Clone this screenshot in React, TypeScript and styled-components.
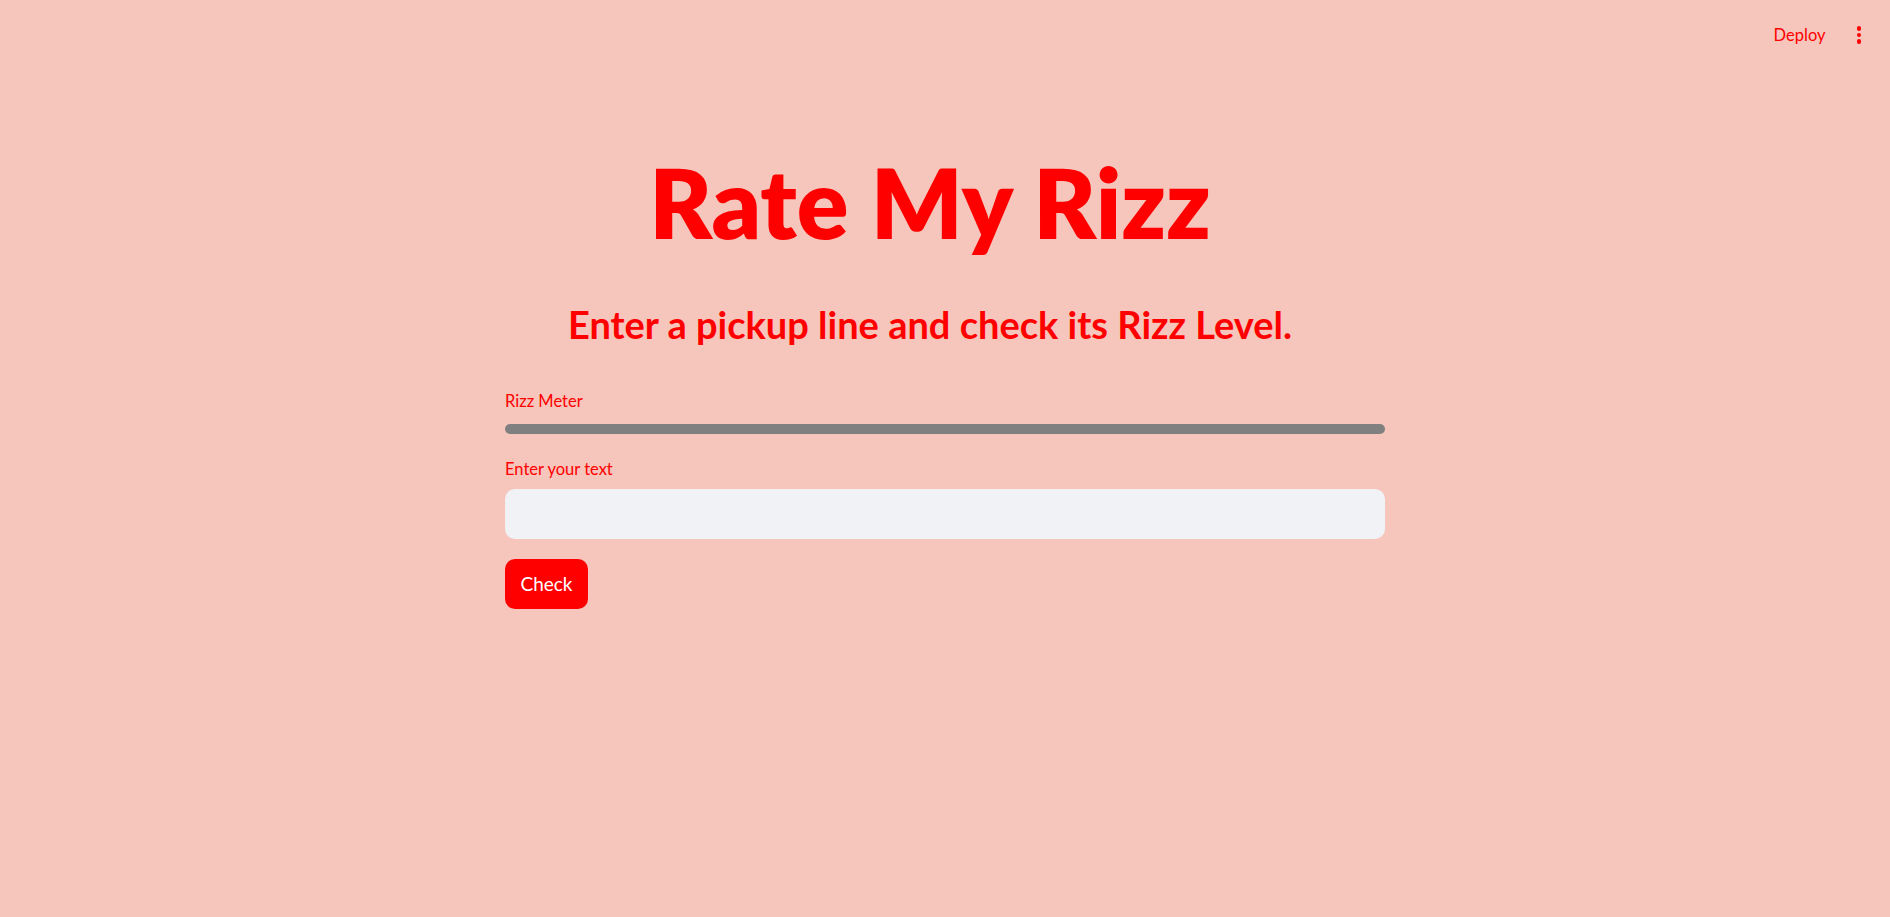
import styled, { createGlobalStyle } from "styled-components";

const GlobalStyle = createGlobalStyle`
  html, body {
    margin: 0;
    padding: 0;
    background: #f6c5bb;
  }
  body {
    font-family: Lato, "Open Sans", sans-serif;
    color: #ff0000;
  }
  * {
    box-sizing: border-box;
  }
`;

const Page = styled.div`
  min-height: 917px;
  background: #f6c5bb;
`;

const Header = styled.header`
  display: flex;
  justify-content: flex-end;
  align-items: center;
  height: 70px;
  padding: 0 29px 0 0;
  gap: 31px;
`;

const DeployButton = styled.button`
  background: none;
  border: none;
  padding: 0;
  font-family: inherit;
  font-size: 16.5px;
  color: #ff0000;
  cursor: pointer;
`;

const MenuDots = styled.div`
  display: flex;
  flex-direction: column;
  gap: 2px;

  span {
    width: 4.5px;
    height: 4.5px;
    border-radius: 50%;
    background: #ff0000;
  }
`;

const Main = styled.main`
  width: 880px;
  margin: 0 auto;
  padding-top: 74px;
`;

const Heading = styled.h1<{ $size: number; $weight: number; $gap?: number }>`
  margin: ${(p) => p.$gap ?? 0}px 0 0;
  padding-right: 30px;
  text-align: center;
  font-size: ${(p) => p.$size}px;
  font-weight: ${(p) => p.$weight};
  line-height: 1.2;
  color: #ff0000;
  white-space: nowrap;
`;

const Field = styled.div<{ $gap: number }>`
  margin-top: ${(p) => p.$gap}px;
  display: flex;
  flex-direction: column;
`;

const Label = styled.label<{ $below: number }>`
  font-size: 16.5px;
  line-height: 1.6;
  color: #ff0000;
  margin-bottom: ${(p) => p.$below}px;
`;

const Track = styled.div`
  height: 10px;
  border-radius: 10px;
  background: #808080;
  overflow: hidden;
`;

const Fill = styled.div`
  height: 100%;
  background: #ff4b4b;
`;

const Input = styled.input`
  height: 50px;
  border: none;
  border-radius: 10px;
  background: #f0f2f6;
  padding: 0 16px;
  font-family: inherit;
  font-size: 19px;
  color: #31333f;
  outline: none;
`;

const CheckButton = styled.button`
  margin-top: 20px;
  align-self: flex-start;
  width: 83px;
  height: 50px;
  padding: 0;
  border: none;
  border-radius: 10px;
  background: #ff0000;
  color: #ffffff;
  font-family: inherit;
  font-size: 19px;
  cursor: pointer;
`;

export default function App() {
  const level = 0;
  return (
    <Page>
      <GlobalStyle />
      <Header>
        <DeployButton>Deploy</DeployButton>
        <MenuDots>
          <span />
          <span />
          <span />
        </MenuDots>
      </Header>
      <Main>
        <Heading $size={96} $weight={800}>
          Rate My Rizz
        </Heading>
        <Heading as="h2" $size={38} $weight={700} $gap={43}>
          Enter a pickup line and check its Rizz Level.
        </Heading>
        <Field $gap={40.5}>
          <Label $below={9}>Rizz Meter</Label>
          <Track>
            <Fill style={{ width: `${level}%` }} />
          </Track>
        </Field>
        <Field $gap={22}>
          <Label $below={6.5}>Enter your text</Label>
          <Input type="text" />
          <CheckButton>Check</CheckButton>
        </Field>
      </Main>
    </Page>
  );
}
